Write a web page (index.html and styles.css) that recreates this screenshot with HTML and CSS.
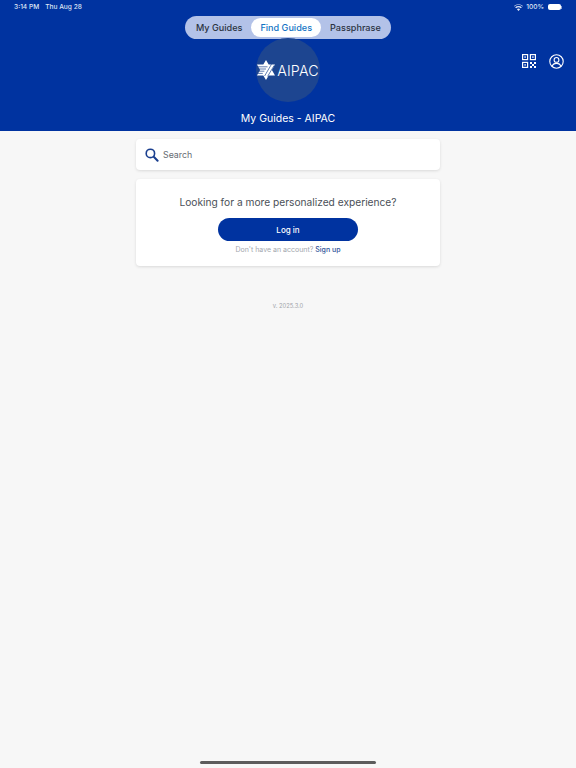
FILE: index.html
```html
<!DOCTYPE html>
<html lang="en">
<head>
  <meta charset="UTF-8">
  <meta name="viewport" content="width=device-width, initial-scale=1.0">
  <title>My Guides - AIPAC</title>
  <link rel="stylesheet" href="styles.css">
</head>
<body>
  <header class="header">
    <div class="status">
      <div class="status-left">
        <span>3:14 PM</span>
        <span>Thu Aug 28</span>
      </div>
      <div class="status-right">
        <svg class="wifi" width="9" height="7" viewBox="0 0 18 14">
          <path fill="#dfe6f5" d="M9 14 L5.8 10.4 A4.6 4.6 0 0 1 12.2 10.4 Z M4.2 8.6 L2.3 6.5 A9.6 9.6 0 0 1 15.7 6.5 L13.8 8.6 A7 7 0 0 0 4.2 8.6 Z M0.7 4.8 L0 4 A13 13 0 0 1 18 4 L17.3 4.8 A12 12 0 0 0 0.7 4.8 Z"/>
        </svg>
        <span>100%</span>
        <div class="battery"></div>
        <div class="battery-cap"></div>
      </div>
    </div>

    <div class="tabs">
      <div class="tab">My Guides</div>
      <div class="tab active">Find Guides</div>
      <div class="tab">Passphrase</div>
    </div>

    <div class="logo-row">
      <div class="logo-circle">
        <svg class="star" width="18" height="20" viewBox="0 0 18 20">
          <path fill="#fff" d="M9 0 L11.7 4.6 L18 4.6 L14.9 10 L18 15.4 L11.7 15.4 L9 20 L6.3 15.4 L0 15.4 L3.1 10 L0 4.6 L6.3 4.6 Z"/>
          <path stroke="#1d4590" stroke-width="0.7" fill="none" d="M0 6.8 L10.5 6.8 M0 9 L9 9 M0 11.2 L7.4 11.2 M0 13.4 L5.8 13.4 M14.5 4.2 L7.6 16 M17.2 5.4 L10.6 16.4"/>
        </svg>
        <span class="logo-text">AIPAC</span>
      </div>
      <div class="actions">
        <svg width="14" height="14" viewBox="0 0 14 14" fill="none" stroke="#fff" stroke-width="1.2">
          <rect x="0.6" y="0.6" width="5" height="5"/>
          <rect x="8.4" y="0.6" width="5" height="5"/>
          <rect x="0.6" y="8.4" width="5" height="5"/>
          <g fill="#fff" stroke="none">
            <rect x="2.4" y="2.4" width="1.4" height="1.4"/>
            <rect x="10.2" y="2.4" width="1.4" height="1.4"/>
            <rect x="2.4" y="10.2" width="1.4" height="1.4"/>
            <rect x="8" y="8" width="2" height="2"/>
            <rect x="12" y="8" width="2" height="2"/>
            <rect x="10" y="10" width="2" height="2"/>
            <rect x="8" y="12" width="2" height="2"/>
            <rect x="12" y="12" width="2" height="2"/>
          </g>
        </svg>
        <svg width="15" height="15" viewBox="0 0 15 15" fill="none" stroke="#fff" stroke-width="1.1">
          <circle cx="7.5" cy="7.5" r="6.7"/>
          <circle cx="7.5" cy="5.9" r="2.4"/>
          <path d="M3.2 12.4 C3.8 9.8 5.6 9.4 7.5 9.4 C9.4 9.4 11.2 9.8 11.8 12.4"/>
        </svg>
      </div>
    </div>

    <div class="page-title">My Guides - AIPAC</div>
  </header>

  <main class="content">
    <div class="card search">
      <svg width="14" height="14" viewBox="0 0 14 14" fill="none" stroke="#1a3f8f" stroke-width="1.6">
        <circle cx="5.4" cy="5.4" r="4.2"/>
        <path stroke-width="2" stroke-linecap="round" d="M9 9 L12.6 12.8"/>
      </svg>
      <span>Search</span>
    </div>

    <div class="card login">
      <div class="login-title">Looking for a more personalized experience?</div>
      <button class="login-btn">Log in</button>
      <div class="signup">Don't have an account? <a href="#">Sign up</a></div>
    </div>

    <div class="version">v. 2025.3.0</div>
  </main>

  <div class="home-bar"></div>
</body>
</html>
```

FILE: styles.css
```css
* {
  box-sizing: border-box;
}
body {
  margin: 0;
  height: 768px;
  overflow: hidden;
  background-color: #f7f7f7;
  font-family: Inter, "Liberation Sans", sans-serif;
  color: #4a4f57;
}
.header {
  height: 131px;
  background-color: #0033a0;
  color: white;
  display: flex;
  flex-direction: column;
  align-items: center;
}
.status {
  width: 100%;
  height: 16px;
  padding: 2px 14px 0;
  display: flex;
  justify-content: space-between;
  align-items: flex-start;
  font-size: 6.6px;
  font-weight: 500;
  line-height: 10px;
  color: #dfe6f5;
}
.status-left {
  display: flex;
  gap: 6px;
}
.status-right {
  display: flex;
  align-items: center;
  height: 10px;
  gap: 2.5px;
}
.wifi {
  margin-right: 1px;
}
.battery {
  width: 13px;
  height: 6px;
  margin-left: 1px;
  border-radius: 2px;
  background: #fff;
}
.battery-cap {
  width: 1px;
  height: 3px;
  margin-left: -2px;
  background: #8fa3d4;
}
.tabs {
  width: 206px;
  height: 23px;
  padding: 2px 2px;
  display: flex;
  justify-content: space-between;
  align-items: stretch;
  border-radius: 12px;
  background-color: #b3c2e8;
  font-size: 9.1px;
  font-weight: 500;
  color: #2a3240;
}
.tab {
  padding: 0 9px;
  display: flex;
  align-items: center;
  border-radius: 10px;
  white-space: nowrap;
}
.tab.active {
  background: #fff;
  color: #1273c4;
}
.logo-row {
  width: 100%;
  height: 65px;
  margin-top: -1px;
  display: grid;
  grid-template-columns: 1fr auto 1fr;
  grid-template-areas: ". logo actions";
}
.logo-circle {
  grid-area: logo;
  width: 64px;
  height: 64px;
  display: flex;
  align-items: center;
  justify-content: center;
  gap: 2px;
  border-radius: 50%;
  background-color: #1d4590;
}
.logo-text {
  font-size: 14.2px;
  font-weight: 300;
  letter-spacing: 0.2px;
  color: #fff;
}
.actions {
  grid-area: actions;
  justify-self: end;
  padding: 16px 12px 0 0;
  display: flex;
  gap: 13px;
  align-items: flex-start;
}
.page-title {
  margin-top: 8px;
  font-size: 10.5px;
  font-weight: 400;
  line-height: 16px;
}
.content {
  width: 304px;
  margin: 0 auto;
  padding-top: 8px;
  display: flex;
  flex-direction: column;
  align-items: stretch;
}
.card {
  background: #fff;
  border-radius: 4px;
  box-shadow: 0 1px 3px rgba(0, 0, 0, 0.12);
}
.search {
  height: 31px;
  padding-left: 9px;
  display: flex;
  align-items: center;
  gap: 4px;
  font-size: 8.8px;
  color: #666b73;
}
.login {
  height: 87px;
  margin-top: 9px;
  padding-top: 15px;
  display: flex;
  flex-direction: column;
  align-items: center;
}
.login-title {
  font-size: 10.2px;
  line-height: 16px;
  color: #4a4f57;
}
.login-btn {
  width: 140px;
  height: 23px;
  margin-top: 8px;
  padding: 0;
  border: none;
  border-radius: 12px;
  background-color: #0033a0;
  color: white;
  font-family: inherit;
  font-size: 8px;
  font-weight: 500;
}
.signup {
  margin-top: 3px;
  font-size: 7px;
  line-height: 11px;
  color: #a3a7ae;
}
.signup a {
  color: #2f5499;
  font-weight: 500;
  text-decoration: none;
}
.version {
  margin-top: 36px;
  text-align: center;
  font-size: 5.8px;
  line-height: 8px;
  color: #a0a3a9;
}
.home-bar {
  position: absolute;
  left: 200px;
  top: 761px;
  width: 176px;
  height: 2.5px;
  border-radius: 2px;
  background: #5c5c5c;
}
```
